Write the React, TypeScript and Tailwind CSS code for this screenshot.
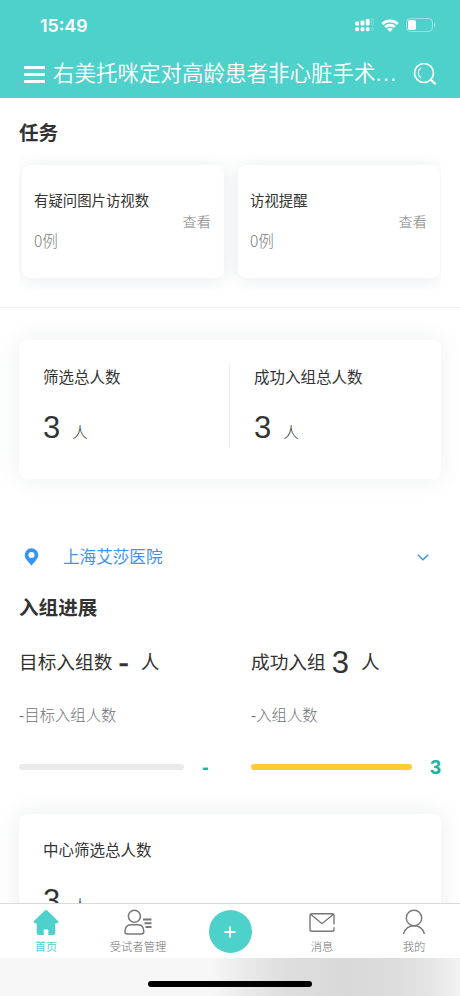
import React from 'react';

const tasks = [
    { id: 1, title: '有疑问图片访视数', count: 0 },
    { id: 2, title: '访视提醒', count: 0 },
];

const totals = [
    { id: 1, label: '筛选总人数', value: 3 },
    { id: 2, label: '成功入组总人数', value: 3 },
];

const StatusBar = () => (
    <div className="flex h-[50px] items-center justify-between pl-10 pr-6 text-white">
        <span className="pt-px font-['Inter',sans-serif] text-[17.8px] leading-none font-semibold">15:49</span>
        <div className="flex items-center">
            <svg width="20" height="14" viewBox="0 0 20 14" fill="currentColor">
                <rect x="0.3" y="3.5" width="3.8" height="4" rx="1" />
                <rect x="5.6" y="2.5" width="3.8" height="5" rx="1" />
                <rect x="10.8" y="1" width="3.8" height="6.5" rx="1" />
                <rect x="16" y="0" width="3" height="8" rx="1" opacity="0.15" />
                <rect x="0.3" y="9.3" width="3.8" height="3.9" rx="1.4" />
                <rect x="5.6" y="9.3" width="3.8" height="3.9" rx="1.4" />
                <rect x="10.8" y="9.3" width="3.8" height="3.9" rx="1.4" />
                <rect x="16" y="9.3" width="3" height="3.9" rx="1.2" opacity="0.15" />
            </svg>
            <svg className="ml-[6px]" width="18" height="13" viewBox="0 0 18 13" fill="currentColor">
                <path d="M0.3 4.1A12.6 12.6 0 0 1 17.7 4.1L15.9 6A10 10 0 0 0 2.1 6Z" />
                <path d="M3.2 7A8.5 8.5 0 0 1 14.8 7L12.9 9A5.8 5.8 0 0 0 5.1 9Z" />
                <path d="M6.1 10.1A4.4 4.4 0 0 1 11.9 10.1L9 13Z" />
            </svg>
            <svg className="ml-[7px]" width="30" height="14" viewBox="0 0 30 14" fill="none">
                <rect x="0.5" y="0.5" width="26" height="13" rx="4" stroke="white" strokeOpacity="0.4" />
                <rect x="2" y="2" width="8" height="10" rx="2" fill="white" />
                <path d="M28 4.6C29.5 5.3 29.5 8.7 28 9.4Z" fill="white" fillOpacity="0.5" />
            </svg>
        </div>
    </div>
);

const Header = () => (
    <header className="h-[98px] shrink-0 bg-[#4fd1cb] text-white">
        <StatusBar />
        <div className="flex h-12 items-center pl-6">
            <div className="flex w-[21px] shrink-0 flex-col gap-1">
                <span className="h-[3px] bg-white/95" />
                <span className="h-[3px] bg-white/95" />
                <span className="h-[3px] bg-white/95" />
            </div>
            <h1 className="ml-2 w-[346px] text-[21.5px] leading-[30px] font-[350] whitespace-nowrap">
                右美托咪定对高龄患者非心脏手术<span className="tracking-[1.4px]">...</span>
            </h1>
            <svg className="ml-[14px]" width="24" height="24" viewBox="0 0 24 24" fill="none" stroke="white" strokeLinecap="round">
                <circle cx="11" cy="11" r="9.5" strokeWidth="1.7" />
                <path d="M7.8 6.3A5.6 5.6 0 0 0 7.8 15.7" strokeWidth="1.1" />
                <path d="M18 18L22 21.6" strokeWidth="2.2" />
            </svg>
        </div>
    </header>
);

const TaskSection = () => (
    <section className="h-[210px] shrink-0 border-b border-[#f0f0f0] px-[19px] pt-[21px]">
        <h2 className="text-[19.6px] leading-7 font-bold">任务</h2>
        <div className="mt-2 flex h-[134px] gap-[14px] overflow-hidden px-[3px] pt-[10px] pr-px">
            {tasks.map((task) => (
                <div key={task.id} className="flex h-[113px] flex-1 items-start justify-between rounded-lg bg-white pt-[26px] pr-[13px] pl-[12px] shadow-[0_2px_18px_rgba(60,80,95,0.12)]">
                    <div>
                        <p className="text-[14.4px] leading-5">{task.title}</p>
                        <p className="mt-[19px] font-['Noto_Sans_CJK_SC',sans-serif] text-[15.6px] leading-5 font-light text-[#808080]">{task.count}例</p>
                    </div>
                    <span className="pt-[21px] text-[14.2px] leading-5 font-light text-[#808080]">查看</span>
                </div>
            ))}
        </div>
    </section>
);

const TotalsCard = () => (
    <section className="mx-[19px] mt-8 flex h-[139px] shrink-0 items-start rounded-lg bg-white pt-6 shadow-[0_0_24px_rgba(60,80,95,0.09)]">
        {totals.map((item) => (
            <div key={item.id} className="h-[84px] w-[210px] border-l border-[#ebebeb] pl-6 first:border-l-0">
                <p className="pt-[2px] text-[15.5px] leading-6">{item.label}</p>
                <p className="mt-5 flex items-baseline leading-9">
                    <span className="text-[31px]">{item.value}</span>
                    <span className="ml-3 text-[15.5px] font-light">人</span>
                </p>
            </div>
        ))}
    </section>
);

const HospitalPicker = () => (
    <div className="mt-[63px] flex h-[30px] shrink-0 items-center pr-[31px] pl-6 text-[#3b94f0]">
        <svg width="15" height="18" viewBox="0 0 15 18">
            <path fill="#3494f8" fillRule="evenodd" d="M7.5 0.3A6.8 6.8 0 0 1 14.3 7.1C14.3 10.8 10.8 13.5 7.5 17.7C4.2 13.5 0.7 10.8 0.7 7.1A6.8 6.8 0 0 1 7.5 0.3ZM7.5 4.1A3 3 0 1 0 7.5 10.1A3 3 0 1 0 7.5 4.1Z" />
        </svg>
        <span className="ml-6 flex-1 pt-[2px] text-[16.6px] leading-6">上海艾莎医院</span>
        <svg width="12" height="7" viewBox="0 0 12 7" fill="none" stroke="currentColor" strokeWidth="1.4">
            <path d="M0.8 0.7L6 5.7L11.2 0.7" />
        </svg>
    </div>
);

const ProgressSection = () => (
    <section className="shrink-0 px-[19px] pt-[21px]">
        <h2 className="text-[19.6px] leading-[30px] font-bold">入组进展</h2>
        <div className="mt-5 grid grid-cols-[232px_1fr]">
            <p className="flex h-10 items-center text-[18.7px] leading-10">
                目标入组数
                <span className="ml-[6px] text-[31px] leading-10 [-webkit-text-stroke:0.6px_#333]">-</span>
                <span className="ml-3">人</span>
            </p>
            <p className="flex h-10 items-center text-[18.7px] leading-10">
                成功入组
                <span className="ml-[6px] text-[31px] leading-10">3</span>
                <span className="ml-3">人</span>
            </p>
        </div>
        <div className="mt-[21px] grid grid-cols-[232px_1fr] text-[15.4px] leading-6 font-light text-[#707376]">
            <p>-目标入组人数</p>
            <p>-入组人数</p>
        </div>
        <div className="mt-[27px] flex h-6 items-center text-[20px] leading-6 font-bold text-[#1cb5a5]">
            <div className="h-[6px] w-[165px] rounded-full bg-[#eaeaea]" />
            <span className="ml-[18px] w-[49px]">-</span>
            <div className="h-[6px] w-[161px] rounded-full bg-[#fccc34]" />
            <span className="ml-auto">3</span>
        </div>
    </section>
);

const CenterCard = () => (
    <section className="mx-[19px] mt-[35px] h-[139px] shrink-0 rounded-lg bg-white pt-[25px] pl-6 shadow-[0_0_24px_rgba(60,80,95,0.11)]">
        <p className="text-[15.5px] leading-6">中心筛选总人数</p>
        <p className="mt-5 flex items-baseline leading-9">
            <span className="text-[31px]">3</span>
            <span className="ml-3 text-[15.5px] font-light">人</span>
        </p>
    </section>
);

const TabBar = () => (
    <nav className="grid h-[55px] shrink-0 grid-cols-5 border-t border-[#d9d9d9] bg-white text-[11.3px] leading-4 font-light text-[#707070]">
        <div className="flex flex-col items-center pt-[5px] text-[#4fd1cb]">
            <svg width="26" height="27" viewBox="0 0 26 27" fill="currentColor">
                <path d="M11.8 1.6Q13 0.5 14.2 1.6L25 12Q26.1 13.8 24.2 14.2H22.3V24Q22.3 26 20.3 26H15.3V20.5H10.7V26H5.7Q3.7 26 3.7 24V14.2H1.8Q-0.1 13.8 1 12Z" />
            </svg>
            <span className="mt-[3px] font-normal">首页</span>
        </div>
        <div className="flex flex-col items-center pt-[5px]">
            <svg width="28" height="27" viewBox="0 0 28 27" fill="none" stroke="#777" strokeWidth="1.5">
                <circle cx="10.4" cy="7.3" r="6" />
                <path d="M3.2 25Q1 25 1 22.8C1 18 3 15.8 7 15.8H14C18 15.8 19.8 18 19.8 22.8Q19.8 25 17.6 25Z" />
                <path d="M19 10.5H27.5M20.5 14.2H27.5M21.5 17.9H27.5" strokeWidth="2" />
            </svg>
            <span className="mt-[3px]">受试者管理</span>
        </div>
        <div className="flex justify-center pt-[6px]">
            <div className="flex size-[43px] items-center justify-center rounded-full bg-[#4fd1cb]">
                <svg width="12" height="12" viewBox="0 0 12 12" stroke="white" strokeWidth="2">
                    <path d="M6 0.5V11.5M0.5 6H11.5" />
                </svg>
            </div>
        </div>
        <div className="flex flex-col items-center pt-[5px]">
            <svg width="26" height="27" viewBox="0 0 26 27" fill="none" stroke="#777" strokeWidth="1.4">
                <path d="M25 15.2V6.5Q25 4.7 23.2 4.7H2.8Q1 4.7 1 6.5V20.5Q1 22.3 2.8 22.3H23.2Q25 22.3 25 20.5V18.2" />
                <path d="M1.6 5.2L13 14.7L24.4 5.2" />
            </svg>
            <span className="mt-[3px]">消息</span>
        </div>
        <div className="flex flex-col items-center pt-[5px]">
            <svg width="24" height="27" viewBox="0 0 24 27" fill="none" stroke="#777" strokeWidth="1.4">
                <circle cx="12" cy="9" r="7.7" />
                <path d="M1.5 25C3 19.8 7 16.7 12 16.7S21 19.8 22.5 25" />
            </svg>
            <span className="mt-[3px]">我的</span>
        </div>
    </nav>
);

const App = () => {
    return (
        <div className="flex h-[996px] w-[460px] flex-col overflow-hidden bg-white font-['Liberation_Sans','Noto_Sans_CJK_SC',sans-serif] text-[#333]">
            <Header />
            <main className="flex h-[805px] shrink-0 flex-col overflow-hidden">
                <TaskSection />
                <TotalsCard />
                <HospitalPicker />
                <ProgressSection />
                <CenterCard />
            </main>
            <TabBar />
            <footer className="flex h-[38px] shrink-0 items-end justify-center bg-[linear-gradient(90deg,#f7f7f7_0%,#f7f7f7_46%,#e9e9e9_54%,#dedede_62%,#d9d9d9_75%,#dcdcdc_86%,#e6e6e6_94%,#f2f2f2_100%)] pb-[9px]">
                <div className="h-[6px] w-[164px] rounded-full bg-black" />
            </footer>
        </div>
    );
};

export default App;
